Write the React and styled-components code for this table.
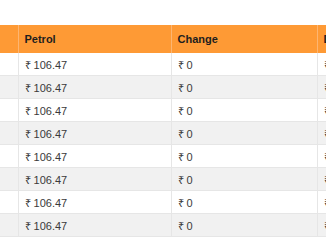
import React from 'react'
import styled, { createGlobalStyle } from 'styled-components'

const GlobalStyle = createGlobalStyle`
  body {
    margin: 0;
    background: #fff;
    font-family: "Liberation Sans", Arial, sans-serif;
    overflow: hidden;
  }
`

const Wrapper = styled.div`
  padding-top: 25px;
  width: 326px;
  overflow: hidden;
`

const Table = styled.table`
  border-collapse: collapse;
  table-layout: fixed;
  width: 549px;
  margin-left: -82px;
  font-size: 11px;
`

const HeadCell = styled.th`
  height: 28px;
  padding: 0 6px;
  background: #fe9a35;
  color: #1e1e1e;
  font-weight: bold;
  text-align: left;
  border-right: 1px solid #fdb571;
  box-sizing: border-box;
`

const Row = styled.tr`
  background: ${({ striped }) => (striped ? '#f1f1f1' : '#fff')};
  border-bottom: 1px solid #e6e6e6;
`

const Cell = styled.td`
  height: 22px;
  padding: 0 6px;
  color: #3a3a3a;
  border-right: 1px solid #e6e6e6;
  white-space: nowrap;
`

const rows = Array.from({ length: 8 }, (_, i) => ({
  city: 'City ' + (i + 1),
  petrol: '₹ 106.47',
  change: '₹ 0',
  diesel: '₹ 94.24'
}))

export default function App() {
  return (
    <Wrapper>
      <GlobalStyle />
      <Table>
        <colgroup>
          <col style={{ width: 100 }} />
          <col style={{ width: 153 }} />
          <col style={{ width: 146 }} />
          <col style={{ width: 150 }} />
        </colgroup>
        <thead>
          <tr>
            <HeadCell>City</HeadCell>
            <HeadCell>Petrol</HeadCell>
            <HeadCell>Change</HeadCell>
            <HeadCell>Diesel</HeadCell>
          </tr>
        </thead>
        <tbody>
          {rows.map((r, i) => (
            <Row key={i} striped={i % 2 === 1}>
              <Cell>{r.city}</Cell>
              <Cell>{r.petrol}</Cell>
              <Cell>{r.change}</Cell>
              <Cell>{r.diesel}</Cell>
            </Row>
          ))}
        </tbody>
      </Table>
    </Wrapper>
  )
}
